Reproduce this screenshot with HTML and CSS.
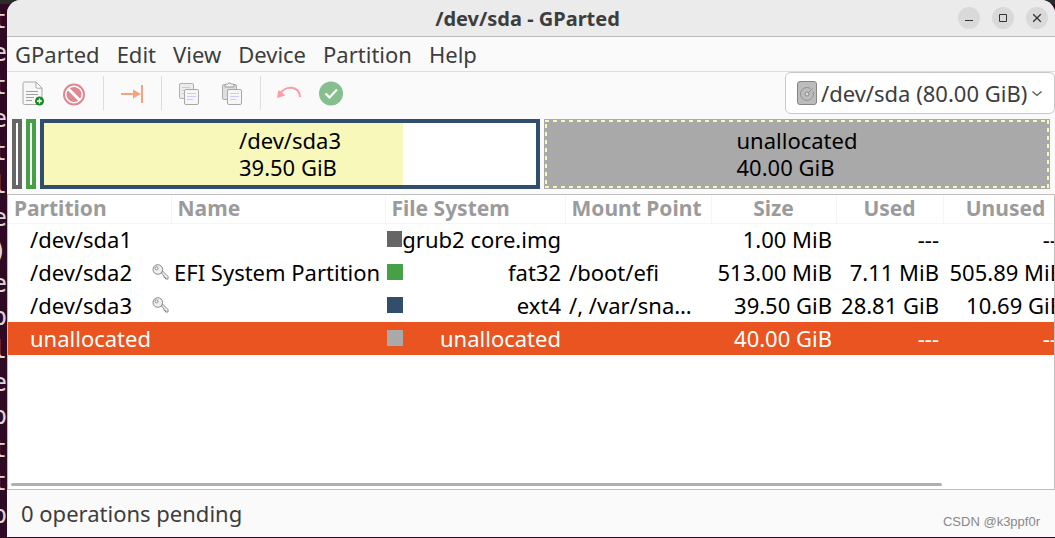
FILE: index.html
```html
<!DOCTYPE html>
<html lang="en">
<head>
<meta charset="utf-8">
<title>/dev/sda - GParted</title>
<link rel="stylesheet" href="styles.css">
</head>
<body>
<div class="desktop">
  <div class="terminal" aria-hidden="true">
    <span>t</span><span>e</span><span>t</span><span>e</span><span>t</span><span>l</span><span>e</span><span>)</span><span>e</span><span>p</span><span>l</span><span>e</span><span>p</span><span>t</span><span>t</span><span>p</span>
  </div>
  <main class="window">
    <header class="titlebar">
      <h1 class="title">/dev/sda - GParted</h1>
      <div class="controls">
        <button class="control" aria-label="Minimize"><svg width="22" height="22" viewBox="0 0 22 22"><path d="M7 13.5h8" stroke="#333"/></svg></button>
        <button class="control" aria-label="Maximize"><svg width="22" height="22" viewBox="0 0 22 22"><path d="M7.5 7.5h7v7h-7z" fill="none" stroke="#333"/></svg></button>
        <button class="control" aria-label="Close"><svg width="22" height="22" viewBox="0 0 22 22"><path d="M7.2 7.2l7.6 7.6M14.8 7.2l-7.6 7.6" stroke="#333" stroke-width="1.3"/></svg></button>
      </div>
    </header>
    <nav class="menubar">
      <button>GParted</button><button>Edit</button><button>View</button><button>Device</button><button>Partition</button><button>Help</button>
    </nav>
    <div class="toolbar">
      <button class="tool" aria-label="New">
        <svg width="25" height="25" viewBox="0 0 25 25"><path d="M3.5 1h11.500l6 6v15q0 1.500-1.500 1.500h-16Q2 23.500 2 22V2.500Q2 1 3.500 1z" fill="#f7f7f7" stroke="#a8a8a8"/><path d="M15 1v5q0 1.200 1.200 1.200H21z" fill="#fff" stroke="#a8a8a8"/><path d="M5 10.500h12M5 13.500h12M5 16.500h8M5 19.500h6" stroke="#a0a0a0"/><circle cx="18.500" cy="20" r="4.500" fill="#138a22"/><path d="M16 20h5M18.500 17.500v5" stroke="#fff" stroke-width="1.400"/></svg>
      </button>
      <button class="tool" aria-label="Delete">
        <svg width="25" height="25" viewBox="0 0 25 25"><circle cx="12" cy="13.500" r="10" fill="#fff" stroke="#e08791" stroke-width="2"/><circle cx="12" cy="13.500" r="7.500" fill="#e08791"/><path d="M6.500 8l11 11" stroke="#fff" stroke-width="3"/></svg>
      </button>
      <span class="separator"></span>
      <button class="tool" aria-label="Resize/Move">
        <svg width="25" height="25" viewBox="0 0 25 25"><path d="M1 13h13" stroke="#f7a182" stroke-width="2"/><path d="M13 8.500l8 4.500-8 4.500z" fill="#f7a182"/><path d="M22 4v18" stroke="#f7a182" stroke-width="2"/></svg>
      </button>
      <span class="separator"></span>
      <button class="tool" aria-label="Copy">
        <svg width="25" height="25" viewBox="0 0 25 25"><rect x="1.500" y="2.500" width="14" height="15" rx="1.500" fill="#ececec" stroke="#b0b0b0"/><path d="M4 6.500h8M4 9.500h3M4 12.500h3" stroke="#ccc"/><rect x="6.500" y="8.500" width="14" height="15" rx="1.500" fill="#f6f6f6" stroke="#a8a8a8"/><path d="M9 12.500h9M9 15.500h9M9 18.500h6" stroke="#ccccf2"/></svg>
      </button>
      <button class="tool" aria-label="Paste">
        <svg width="25" height="25" viewBox="0 0 25 25"><rect x="3.500" y="3.500" width="14" height="15" rx="1.500" fill="#dedede" stroke="#aaa"/><path d="M6 6V4.500q0-1.500 1.500-1.500h1q1.500-2.500 4 0h1q1.500 0 1.500 1.500V6z" fill="#f2f2f2" stroke="#999"/><rect x="8.500" y="8.500" width="14" height="15" rx="1.500" fill="#f6f6f6" stroke="#a8a8a8"/><path d="M11 12.500h9M11 15.500h9M11 18.500h6" stroke="#ccccf2"/></svg>
      </button>
      <span class="separator"></span>
      <button class="tool" aria-label="Undo">
        <svg width="25" height="25" viewBox="0 0 25 25"><path d="M3 13C7 5 22 3.500 23 16" fill="none" stroke="#fb9ba6" stroke-width="2"/><path d="M1.500 9L8.500 14.500 0 17z" fill="#fb9ba6"/></svg>
      </button>
      <button class="tool" aria-label="Apply">
        <svg width="25" height="25" viewBox="0 0 25 25"><circle cx="13" cy="12.500" r="12" fill="#86bf8d"/><path d="M7.500 12.500l4 4 7.500-8" fill="none" stroke="#fff" stroke-width="2.200"/></svg>
      </button>
      <div class="device">
        <svg class="disk" width="20" height="24" viewBox="0 0 20 24"><rect x=".5" y=".5" width="19" height="23" rx="2.500" fill="#bcbcbc" stroke="#858585"/><path d="M13.500 7.500a6.500 6.500 0 1 0 2.500 3M11.500 11.500l4-4" fill="none" stroke="#909090"/><circle cx="10" cy="13" r="2" fill="#ddd" stroke="#888"/></svg>
        <select class="device-select" aria-label="Device"><option>/dev/sda (80.00 GiB)</option></select>
        <svg class="chevron" width="12" height="8" viewBox="0 0 12 8"><path d="M1.500 1.500L6 5.500l4.500-4" fill="none" stroke="#555" stroke-width="1.300"/></svg>
      </div>
    </div>
    <section class="diskmap" aria-label="Disk layout">
      <div class="part grub"></div>
      <div class="part fat"></div>
      <div class="part ext">
        <div class="used"></div>
        <p class="part-label">/dev/sda3<br>39.50 GiB</p>
      </div>
      <div class="part free">
        <svg class="dashes" width="100%" height="100%"><rect width="100%" height="100%" fill="none" stroke="#f8f8ba" stroke-width="4" stroke-dasharray="4 4"/></svg>
        <p class="part-label">unallocated<br>40.00 GiB</p>
      </div>
    </section>
    <section class="list">
      <table class="partitions">
        <colgroup><col class="c-part"><col class="c-name"><col class="c-fs"><col class="c-mount"><col class="c-size"><col class="c-used"><col class="c-unused"></colgroup>
        <thead>
          <tr><th>Partition</th><th>Name</th><th>File System</th><th>Mount Point</th><th class="center">Size</th><th class="center">Used</th><th class="center">Unused</th></tr>
        </thead>
        <tbody>
          <tr><td>/dev/sda1</td><td></td><td><div class="fs"><i class="swatch grub-color"></i>grub2 core.img</div></td><td></td><td class="num">1.00 MiB</td><td class="num">---</td><td class="num">---</td></tr>
          <tr><td>/dev/sda2</td><td><div class="name"><svg class="key" width="17" height="16" viewBox="0 0 17 16"><path d="M9.500 9l1-2 5.500 5.500v2.500h-2.500v-1.500h-1.500V12z" fill="#eee" stroke="#888"/><circle cx="5.800" cy="5.500" r="4.800" fill="#eee" stroke="#888"/><circle cx="4.500" cy="4.300" r="1.500" fill="#fff" stroke="#888"/></svg>EFI System Partition</div></td><td><div class="fs"><i class="swatch fat-color"></i>fat32</div></td><td>/boot/efi</td><td class="num">513.00 MiB</td><td class="num">7.11 MiB</td><td class="num">505.89 MiB</td></tr>
          <tr><td>/dev/sda3</td><td><div class="name"><svg class="key" width="17" height="16" viewBox="0 0 17 16"><path d="M9.500 9l1-2 5.500 5.500v2.500h-2.500v-1.500h-1.500V12z" fill="#eee" stroke="#888"/><circle cx="5.800" cy="5.500" r="4.800" fill="#eee" stroke="#888"/><circle cx="4.500" cy="4.300" r="1.500" fill="#fff" stroke="#888"/></svg></div></td><td><div class="fs"><i class="swatch ext-color"></i>ext4</div></td><td>/, /var/sna…</td><td class="num">39.50 GiB</td><td class="num">28.81 GiB</td><td class="num">10.69 GiB</td></tr>
          <tr class="selected"><td>unallocated</td><td></td><td><div class="fs"><i class="swatch free-color"></i>unallocated</div></td><td></td><td class="num">40.00 GiB</td><td class="num">---</td><td class="num">---</td></tr>
        </tbody>
      </table>
      <div class="scrollbar"></div>
    </section>
    <footer class="status"><span>0 operations pending</span><small class="credit">CSDN @k3ppf0r</small></footer>
  </main>
</div>
</body>
</html>
```
FILE: styles.css
```css
* { box-sizing: border-box; }

body {
  margin: 0;
  font: 22px/27px "Noto Sans", sans-serif;
  color: #3d3d3d;
  background: #300a24;
}

button, select { font: inherit; color: inherit; }
button { padding: 0; border: 0; background: none; }
svg { display: block; }

.desktop {
  display: flex;
  height: 100vh;
  padding-bottom: 1px;
  overflow: hidden;
  background: linear-gradient(#2b2b2b 4px, #300a24 4px);
}

.terminal {
  flex: none;
  display: flex;
  flex-direction: column;
  align-items: flex-end;
  width: 7px;
  padding-top: 4px;
  overflow: hidden;
  font: 24px/33px "DejaVu Sans Mono", monospace;
  color: #dcd6da;
}

.window {
  flex: 1;
  min-width: 0;
  display: flex;
  flex-direction: column;
  overflow: hidden;
  background: #fafafa;
  border-radius: 14px 14px 0 0;
}

.titlebar {
  display: grid;
  grid-template-columns: 1fr auto 1fr;
  align-items: center;
  height: 37px;
  padding-right: 7px;
  background: #ebebeb;
  border-bottom: 1px solid #b9b9b9;
}
.title {
  grid-column: 2;
  margin: 0;
  font-size: 20px;
  line-height: 27px;
}
.controls { display: flex; justify-content: flex-end; gap: 12px; }
.control { width: 22px; height: 22px; border-radius: 50%; background: #d9d9d9; }

.menubar {
  display: flex;
  gap: 17px;
  height: 35px;
  padding-left: 8px;
  border-bottom: 1px solid #dedede;
}

.toolbar {
  display: flex;
  align-items: center;
  gap: 16px;
  height: 42px;
  padding-left: 14px;
}
.tool { width: 25px; height: 25px; }
.separator { width: 1px; height: 34px; background: #dedede; }

.device { position: relative; margin-left: auto; width: 270px; }
.device-select {
  appearance: none;
  display: block;
  width: 100%;
  height: 42px;
  padding: 0 24px 0 35px;
  border: 1px solid #c8c8c8;
  border-radius: 6px;
  background: #fff;
}
.disk { position: absolute; left: 12px; top: 9px; }
.chevron { position: absolute; right: 12px; top: 18px; }

.diskmap {
  display: grid;
  grid-template-columns: 10px 10px 500fr 506fr;
  gap: 4px;
  padding: 5px;
}
.part {
  position: relative;
  display: flex;
  align-items: center;
  justify-content: center;
  height: 70px;
  border: 4px solid;
  background: #fff;
}
.grub { border-color: #666; }
.fat { border-color: #46a046; }
.ext { border-color: #314e6c; }
.free { border: 0; background: #a9a9a9; }
.used { position: absolute; left: 0; top: 0; bottom: 0; width: 73%; background: #f8f8ba; }
.part-label { position: relative; margin: 0; color: #000; }
.dashes { position: absolute; left: 0; top: 0; padding: 1px; }

.list {
  flex: 1;
  min-height: 0;
  display: flex;
  flex-direction: column;
  justify-content: space-between;
  overflow: hidden;
  background: #fff;
  border: 1px solid #bfbfbf;
}
.partitions {
  table-layout: fixed;
  border-collapse: collapse;
  width: 1060px;
  color: #000;
}
.c-part { width: 163px; }
.c-name { width: 214px; }
.c-fs { width: 180px; }
.c-mount { width: 146px; }
.c-size { width: 125px; }
.c-used { width: 107px; }
.c-unused { width: 125px; }

th {
  height: 28px;
  padding: 0 6px;
  font-size: 21px;
  line-height: 27px;
  text-align: left;
  white-space: nowrap;
  color: #9b9b9b;
  border: solid #f5f5f5;
  border-width: 0 1px 1px 0;
}
.center { text-align: center; }
td { height: 33px; padding: 0 4px; white-space: nowrap; }
td:first-child { padding-left: 22px; }
td:nth-child(2) { padding: 0; }
td:nth-child(3) { padding: 0 4px 0 2px; }
.num { text-align: right; }
.name { display: flex; align-items: center; gap: 5px; }
.key { flex: none; margin: 0 0 2px -19px; }
.fs { display: flex; align-items: center; justify-content: space-between; }
.swatch { width: 16px; height: 16px; margin-bottom: 2px; }
.grub-color { background: #666; }
.fat-color { background: #46a046; }
.ext-color { background: #314e6c; }
.free-color { background: #a9a9a9; }
.selected { color: #fff; background: #e95420; }

.scrollbar {
  width: 89%;
  height: 3px;
  margin: 0 3px 3px;
  border-radius: 2px;
  background: #b0b0b0;
}

.status {
  display: flex;
  align-items: center;
  justify-content: space-between;
  height: 47px;
  padding: 0 15px 0 14px;
}
.credit { padding-top: 16px; font: 13px/14px "Liberation Sans", sans-serif; color: #888; }
```
